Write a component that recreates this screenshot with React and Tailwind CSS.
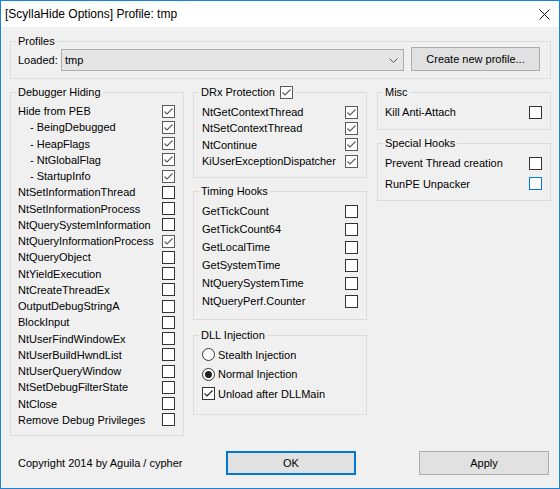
import React from "react";

const hiding = [
  ["Hide from PEB", false, true],
  ["- BeingDebugged", true, true],
  ["- HeapFlags", true, true],
  ["- NtGlobalFlag", true, true],
  ["- StartupInfo", true, true],
  ["NtSetInformationThread", false, false],
  ["NtSetInformationProcess", false, false],
  ["NtQuerySystemInformation", false, false],
  ["NtQueryInformationProcess", false, true],
  ["NtQueryObject", false, false],
  ["NtYieldExecution", false, false],
  ["NtCreateThreadEx", false, false],
  ["OutputDebugStringA", false, false],
  ["BlockInput", false, false],
  ["NtUserFindWindowEx", false, false],
  ["NtUserBuildHwndList", false, false],
  ["NtUserQueryWindow", false, false],
  ["NtSetDebugFilterState", false, false],
  ["NtClose", false, false],
  ["Remove Debug Privileges", false, false],
];

const drx = ["NtGetContextThread", "NtSetContextThread", "NtContinue", "KiUserExceptionDispatcher"];
const timing = ["GetTickCount", "GetTickCount64", "GetLocalTime", "GetSystemTime", "NtQuerySystemTime", "NtQueryPerf.Counter"];

function Check({ on, dark, hover }) {
  const border = hover ? "border-[#0078d7]" : on && !dark ? "border-[#5a5a5a]" : "border-[#333333]";
  return (
    <span className={`w-[13px] h-[13px] shrink-0 border bg-white flex items-center justify-center ${border}`}>
      {on && (
        <svg width="11" height="11" viewBox="0 0 11 11">
          <polyline points="1.5,5.5 4,8 9.5,2.5" fill="none" stroke={dark ? "#222" : "#5a5a5a"} strokeWidth="1.1" />
        </svg>
      )}
    </span>
  );
}

function Radio({ on }) {
  return (
    <span className="w-[13px] h-[13px] shrink-0 rounded-full border border-[#333333] bg-white flex items-center justify-center">
      {on && <span className="w-[7px] h-[7px] rounded-full bg-[#222]" />}
    </span>
  );
}

function Row({ label, on, indent, h, hover }) {
  return (
    <div className={`flex items-center justify-between ${h}`}>
      <span className={indent ? "pl-[12px]" : ""}>{label}</span>
      <Check on={on} hover={hover} />
    </div>
  );
}

function Group({ title, className, children }) {
  return (
    <fieldset className={`border border-[#dcdcdc] p-0 m-0 min-w-0 ${className}`}>
      <legend className="ml-[5px] px-[2px] h-[16px] leading-[16px]">
        <span className="flex items-center">{title}</span>
      </legend>
      {children}
    </fieldset>
  );
}

function Button({ children, focus }) {
  return (
    <div
      className={`w-[130px] h-[24px] bg-[#e1e1e1] flex items-center justify-center ${
        focus ? "border-2 border-[#0078d7]" : "border border-[#adadad]"
      }`}
    >
      {children}
    </div>
  );
}

export default function App() {
  return (
    <div className="w-[560px] h-[489px] border border-[#1883d7] bg-[#f0f0f0] text-black text-[11px] leading-[16px] font-['Liberation_Sans',Arial,sans-serif] flex flex-col">
      <div className="h-[26px] bg-white flex items-center justify-between pl-[4px] pr-[9px] text-[12px] shrink-0">
        <span>[ScyllaHide Options] Profile: tmp</span>
        <svg width="11" height="11" viewBox="0 0 11 11">
          <path d="M0.5 0.5 L10.5 10.5 M10.5 0.5 L0.5 10.5" stroke="#111" strokeWidth="1" />
        </svg>
      </div>

      <div className="pl-[9px] pr-[8px] pt-[6px] flex flex-col">
        <Group title="Profiles" className="h-[46px]">
          <div className="flex items-end h-[24px] -mt-[2px] pl-[7px]">
            <span className="w-[43px] h-[22px] flex items-center">Loaded:</span>
            <div className="w-[343px] h-[22px] bg-[#e5e5e5] border border-[#acacac] flex items-center justify-between pl-[3px] pr-[5px]">
              <span>tmp</span>
              <svg width="9" height="5" viewBox="0 0 9 5">
                <polyline points="0.5,0.5 4.5,4.5 8.5,0.5" fill="none" stroke="#555" strokeWidth="1" />
              </svg>
            </div>
            <div className="ml-[7px]">
              <div className="w-[129px] h-[24px] bg-[#e1e1e1] border border-[#adadad] flex items-center justify-center">
                Create new profile...
              </div>
            </div>
          </div>
        </Group>

        <div className="flex mt-[5px] items-start">
          <Group title="Debugger Hiding" className="w-[174px] h-[352px]">
            <div className="pl-[7px] pr-[8px] pt-[3px]">
              {hiding.map(([label, indent, on]) => (
                <Row key={label} label={label} indent={indent} on={on} h="h-[16.25px]" />
              ))}
            </div>
          </Group>

          <div className="w-[174px] ml-[9px] flex flex-col gap-[6px]">
            <Group
              title={
                <>
                  <span>DRx Protection</span>
                  <span className="ml-[5px]">
                    <Check on />
                  </span>
                </>
              }
              className="h-[94px]"
            >
              <div className="pl-[8px] pr-[8px] pt-[4px]">
                {drx.map((l) => (
                  <Row key={l} label={l} on h="h-[16.33px]" />
                ))}
              </div>
            </Group>

            <Group title="Timing Hooks" className="h-[137px] -mt-[1px]">
              <div className="pl-[8px] pr-[8px] pt-[3px]">
                {timing.map((l) => (
                  <Row key={l} label={l} h="h-[18px]" />
                ))}
              </div>
            </Group>

            <Group title="DLL Injection" className="h-[88px] mt-[1px]">
              <div className="pl-[8px] pr-[8px] pt-[2px]">
                <div className="h-[19.5px] flex items-center gap-[3px]">
                  <Radio />
                  <span>Stealth Injection</span>
                </div>
                <div className="h-[19.5px] flex items-center gap-[3px]">
                  <Radio on />
                  <span>Normal Injection</span>
                </div>
                <div className="h-[19.5px] flex items-center gap-[3px]">
                  <Check on dark />
                  <span>Unload after DLLMain</span>
                </div>
              </div>
            </Group>
          </div>

          <div className="w-[174px] ml-[10px] flex flex-col gap-[5px]">
            <Group title="Misc" className="h-[46px]">
              <div className="pl-[7px] pr-[8px] pt-[4px]">
                <Row label="Kill Anti-Attach" h="h-[16px]" />
              </div>
            </Group>
            <Group title="Special Hooks" className="h-[66px]">
              <div className="pl-[7px] pr-[8px] pt-[2px]">
                <Row label="Prevent Thread creation" h="h-[20.5px]" />
                <Row label="RunPE Unpacker" h="h-[20.5px]" hover />
              </div>
            </Group>
          </div>
        </div>

        <div className="flex items-center h-[24px] mt-[15px] pl-[8px]">
          <span className="w-[208px]">Copyright 2014 by Aguila / cypher</span>
          <Button focus>OK</Button>
          <div className="ml-[63px]">
            <Button>Apply</Button>
          </div>
        </div>
      </div>
    </div>
  );
}
